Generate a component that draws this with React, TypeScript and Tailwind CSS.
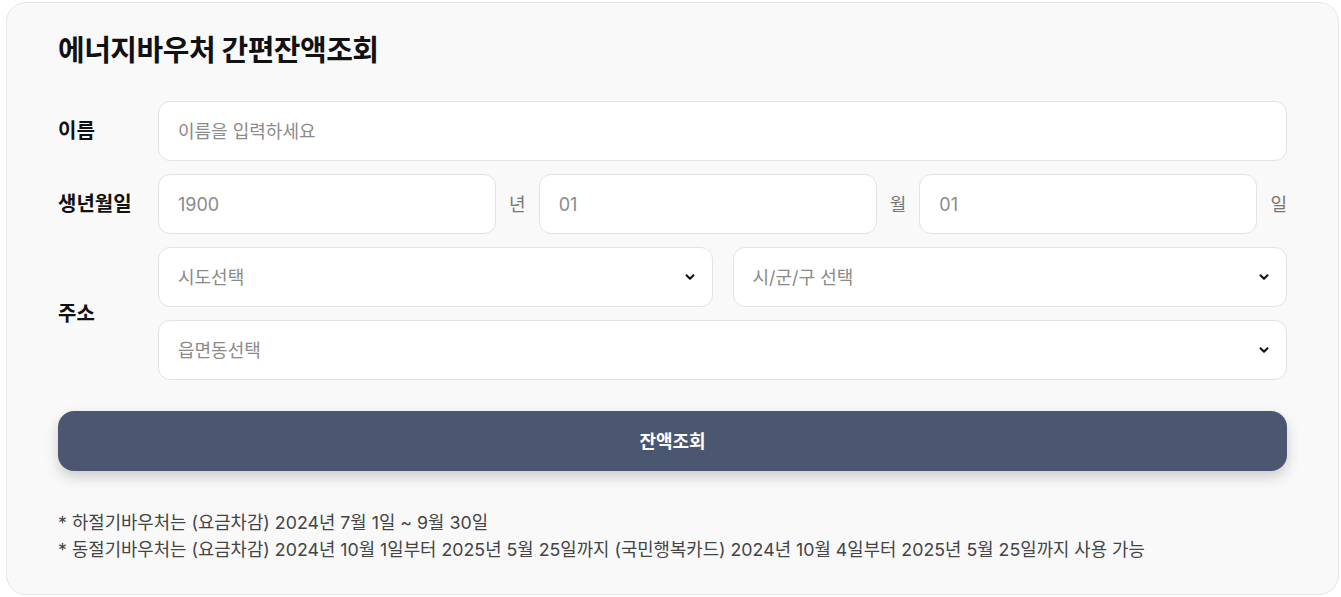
import React from "react";

const font = { fontFamily: 'Inter, "Noto Sans CJK KR", "Noto Sans", sans-serif' };

const Chevron = () => (
  <svg
    className="pointer-events-none absolute right-[16px] top-1/2 -translate-y-1/2"
    width="14"
    height="14"
    viewBox="0 0 24 24"
    fill="none"
    stroke="#111"
    strokeWidth="3.5"
    strokeLinecap="round"
    strokeLinejoin="round"
  >
    <path d="m6 9 6 6 6-6" />
  </svg>
);

const Select = ({ placeholder }: { placeholder: string }) => (
  <div className="relative flex-1">
    <select
      defaultValue=""
      className="h-[60px] w-full appearance-none rounded-[12px] border border-[#e3e3e3] bg-white px-[19px] text-[18px] text-[#8a8a8a] outline-none"
    >
      <option value="" disabled>
        {placeholder}
      </option>
    </select>
    <Chevron />
  </div>
);

const Field = ({ placeholder }: { placeholder: string }) => (
  <input
    placeholder={placeholder}
    className="h-[60px] w-full min-w-0 flex-1 rounded-[12px] border border-[#e3e3e3] bg-white px-[19px] text-[18px] text-[#222] outline-none placeholder:text-[#8a8a8a]"
  />
);

const Label = ({ children }: { children: React.ReactNode }) => (
  <div className="w-[100px] shrink-0 text-[20px] font-bold text-[#111]">{children}</div>
);

const Suffix = ({ children }: { children: React.ReactNode }) => (
  <span className="shrink-0 text-[18px] text-[#777]">{children}</span>
);

export default function App() {
  return (
    <div className="bg-white pt-[2px] pl-[6px] pr-[2px] pb-[2px]" style={font}>
      <div className="rounded-[20px] border border-[#e6e6e6] bg-[#f9f9fa] px-[51px] pt-[28px] pb-[31px]">
        <h1 className="mb-[30px] text-[29px] font-bold leading-[40px] tracking-[-0.5px] text-[#111]">
          에너지바우처 간편잔액조회
        </h1>

        <div className="flex flex-col gap-[13px]">
          <div className="flex items-center">
            <Label>이름</Label>
            <Field placeholder="이름을 입력하세요" />
          </div>

          <div className="flex items-center">
            <Label>생년월일</Label>
            <div className="flex flex-1 items-center gap-[13px]">
              <Field placeholder="1900" />
              <Suffix>년</Suffix>
              <Field placeholder="01" />
              <Suffix>월</Suffix>
              <Field placeholder="01" />
              <Suffix>일</Suffix>
            </div>
          </div>

          <div className="flex items-center">
            <Label>주소</Label>
            <div className="flex flex-1 flex-col gap-[13px]">
              <div className="flex gap-[20px]">
                <Select placeholder="시도선택" />
                <Select placeholder="시/군/구 선택" />
              </div>
              <Select placeholder="읍면동선택" />
            </div>
          </div>
        </div>

        <button className="mt-[31px] h-[60px] w-full rounded-[16px] bg-[#4b5670] text-[18px] font-bold text-white shadow-[0_6px_14px_rgba(0,0,0,0.18)]">
          잔액조회
        </button>

        <div className="mt-[38px] text-[17.8px] leading-[27px] text-[#444]">
          <p>* 하절기바우처는 (요금차감) 2024년 7월 1일 ~ 9월 30일</p>
          <p>
            * 동절기바우처는 (요금차감) 2024년 10월 1일부터 2025년 5월 25일까지 (국민행복카드) 2024년 10월 4일부터 2025년 5월 25일까지 사용 가능
          </p>
        </div>
      </div>
    </div>
  );
}
